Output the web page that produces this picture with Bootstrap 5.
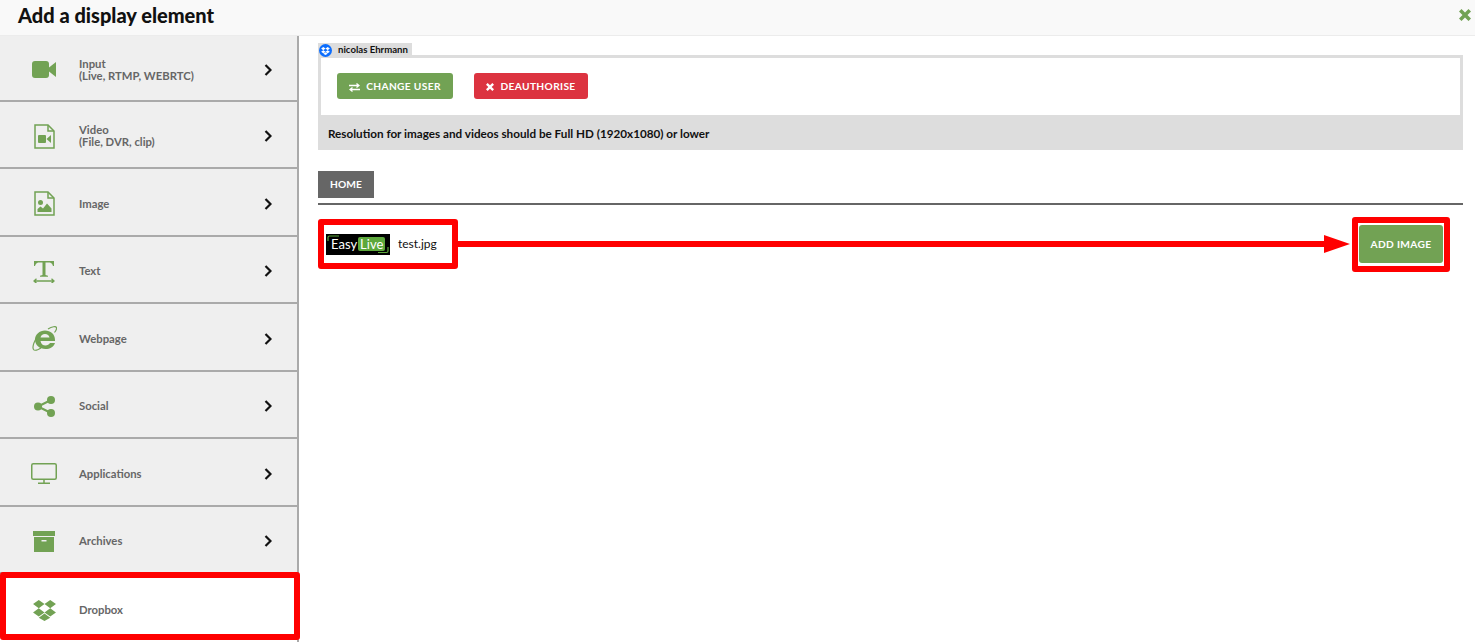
<!DOCTYPE html>
<html lang="en"><head><meta charset="utf-8"><title>Add a display element</title>
<link rel="stylesheet" href="https://cdn.jsdelivr.net/npm/bootstrap@5.3.0/dist/css/bootstrap.min.css">
<style>
html,body{height:642px;overflow:hidden;background:#fff}
body{font-family:Lato,"Liberation Sans",sans-serif;position:relative}
.top-head{height:36px;background:#f9f9f9;border-bottom:1px solid #ececec;padding:0 4px 6px 18px}
.top-head h1{font-size:20px;font-weight:900;color:#111;line-height:30px;margin:0}
.side{width:299px;height:606px;border-right:2px solid #aaa;background:#efefef;flex:none}
.side-item{height:67.5px;border-bottom:2px solid #aaa;padding:4px 25px 0 30px;color:#666;font-size:11.3px;font-weight:700;line-height:12px}
.side-item:first-child{height:65.5px}
.side-item.on{background:#fff;border-bottom:0}
.side-ico{width:28px;margin-right:21px;flex:none;display:flex;justify-content:center}
.gfill{fill:#72a254}
.gline{fill:none;stroke:#72a254}
.main{padding:7px 12px 0 19px;flex:1;min-width:0}
.acct-tab{width:94px;height:12px;background:#ddd;font-size:9.6px;font-weight:700;line-height:14px;color:#111;position:relative;padding-left:20px}
.db-dot{position:absolute;left:1px;top:1px;width:13px;height:13px;border-radius:50%;background:#0d6efd;display:flex;align-items:center;justify-content:center}
.acct-box{border:3px solid #ddd;border-bottom:0;background:#ddd}
.acct-body{height:57px;background:#fff;padding:15px 16px;gap:21px}
.act-btn{height:26px;border:0;border-radius:3px;color:#fff;font-size:10.2px;font-weight:700;letter-spacing:.35px;padding:2px 0 0;gap:6px}
.act-green{width:116px;background:#72a254}
.act-red{width:114px;background:#dc3340}
.acct-note{height:35px;padding:0 7px;font-size:11.7px;font-weight:700;color:#111;line-height:37px}
.crumb-row{margin-top:21px;border-bottom:2px solid #666;height:34px}
.crumb{width:56px;height:27px;background:#666;color:#fff;font-size:10.2px;font-weight:700;letter-spacing:.1px;border:0;border-radius:0;padding:0}
.file-row{height:54px;margin-top:12px;padding:0 20px 0 8px}
.file-logo{width:64px;height:21px;background:#000;margin-right:8px;color:#fff;font-size:13px;line-height:21px;gap:1px;padding-left:5px;position:relative}
.file-logo b{background:#5da83c;font-weight:400;padding:0 2px;line-height:14px;border-radius:2px}
.logo-mark{position:absolute;left:0;top:0}
.file-name{font-size:12px;color:#111}
.add-btn{width:84px;height:38px;background:#72a254;border:0;border-radius:3px;color:#fff;font-size:10.2px;font-weight:700;letter-spacing:.35px;padding:2px 0 0}
.note-box{position:absolute;border:6px solid #f00;border-radius:3px;pointer-events:none}
.note-arrow{position:absolute;left:458px;top:233px}
</style></head><body>
<svg width="0" height="0" class="position-absolute"><defs>
<symbol id="chev" viewBox="0 0 8 12"><path d="M1.500 1 6.500 6l-5 5" fill="none" stroke="#111" stroke-width="2.200"/></symbol>
<symbol id="dbx" viewBox="0 0 24 22"><path d="M6 0 0 4.200l6 4.400 6-4.400zM18 0l-6 4.200 6 4.400 6-4.400zM0 13l6 4.400 6-4.400-6-4.400zM18 8.600 12 13l6 4.400 6-4.400zM6 18.600l6 3.400 6-3.400-6-4.400z"/></symbol>
</defs></svg>
<header class="top-head d-flex justify-content-between align-items-center">
<h1>Add a display element</h1>
<svg width="12" height="12" viewBox="0 0 12 12"><path d="M2.500 0 6 3.500 9.500 0 12 2.500 8.500 6 12 9.500 9.500 12 6 8.500 2.500 12 0 9.500 3.500 6 0 2.500z" class="gfill"/></svg>
</header>
<div class="d-flex">
<nav class="side d-flex flex-column">
<div class="side-item d-flex align-items-center"><span class="side-ico"><svg width="24" height="17" viewBox="0 0 24 17"><rect width="17" height="17" rx="3" class="gfill"/><path d="M17 6.500 24 1v15l-7-5.500z" class="gfill"/></svg></span><span class="flex-grow-1">Input<br>(Live, RTMP, WEBRTC)</span><svg width="8" height="12"><use href="#chev"/></svg></div>
<div class="side-item d-flex align-items-center"><span class="side-ico"><svg width="21" height="25" viewBox="0 0 21 25"><path d="M1 1h13l6 6v17H1z" class="gline" stroke-width="1.500"/><path d="M14 1v6h6" class="gline" stroke-width="1.500"/><rect x="4" y="11" width="8" height="8" rx="1" class="gfill"/><path d="M12.500 15 17 11v8z" class="gfill"/></svg></span><span class="flex-grow-1">Video<br>(File, DVR, clip)</span><svg width="8" height="12"><use href="#chev"/></svg></div>
<div class="side-item d-flex align-items-center"><span class="side-ico"><svg width="21" height="25" viewBox="0 0 21 25"><path d="M1 1h13l6 6v17H1z" class="gline" stroke-width="1.500"/><path d="M14 1v6h6" class="gline" stroke-width="1.500"/><circle cx="6.500" cy="11.500" r="2.500" class="gfill"/><path d="M3.500 21v-3l3-2.500 2.500 2 4-5 4.500 5v3.500z" class="gfill"/></svg></span><span class="flex-grow-1">Image</span><svg width="8" height="12"><use href="#chev"/></svg></div>
<div class="side-item d-flex align-items-center"><span class="side-ico"><svg width="22" height="23" viewBox="0 0 22 23"><path d="M1 6V1h20v5h-1q-.5-3-3-3.500h-4.500V15l2.500.8v1H7v-1l2.500-.8V2.500H5Q2.500 3 2 6z" class="gfill"/><path d="M1 21h20M3.500 18.700 1 21l2.500 2.300M18.500 18.700 21 21l-2.500 2.300" class="gline" stroke-width="1.300"/></svg></span><span class="flex-grow-1">Text</span><svg width="8" height="12"><use href="#chev"/></svg></div>
<div class="side-item d-flex align-items-center"><span class="side-ico"><svg width="25" height="25" viewBox="0 0 25 25"><path d="M13 4.500c5.500 0 10 3.500 10 9.500v1H8.500c.5 3 2.500 4.500 5 4.500 2 0 3.500-1 4.500-2.500h5c-1.500 4-5 6-9.500 6C7.500 23 3 19 3 13.500 3 8.500 7.500 4.500 13 4.500zM8.500 11.500h9C17 9.500 15.500 8 13 8s-4 1.500-4.500 3.500z" class="gfill"/><path d="M16 3c4-2.500 8-3 8.500-1.500.3 1-.5 3-2 5M5 11C2 16 0 21 1.500 23.500 2.500 25 6 24 9 22" class="gline" stroke-width="1.200"/></svg></span><span class="flex-grow-1">Webpage</span><svg width="8" height="12"><use href="#chev"/></svg></div>
<div class="side-item d-flex align-items-center"><span class="side-ico"><svg width="21" height="21" viewBox="0 0 21 21"><circle cx="4" cy="10.500" r="4" class="gfill"/><circle cx="17" cy="4" r="4" class="gfill"/><circle cx="17" cy="17" r="4" class="gfill"/><path d="M4 10.500 17 4M4 10.500 17 17" class="gline" stroke-width="2"/></svg></span><span class="flex-grow-1">Social</span><svg width="8" height="12"><use href="#chev"/></svg></div>
<div class="side-item d-flex align-items-center"><span class="side-ico"><svg width="26" height="21" viewBox="0 0 26 21"><rect x=".75" y=".75" width="24.500" height="15.500" rx="1.500" class="gline" stroke-width="1.500"/><path d="M13 16.500V20M7 20.250h12" class="gline" stroke-width="1.500"/></svg></span><span class="flex-grow-1">Applications</span><svg width="8" height="12"><use href="#chev"/></svg></div>
<div class="side-item d-flex align-items-center"><span class="side-ico"><svg width="22" height="21" viewBox="0 0 22 21"><rect width="22" height="5" class="gfill"/><path d="M1 6h20v15H1zM8.500 9v1.500h5V9z" class="gfill" fill-rule="evenodd"/></svg></span><span class="flex-grow-1">Archives</span><svg width="8" height="12"><use href="#chev"/></svg></div>
<div class="side-item on d-flex align-items-center flex-grow-1"><span class="side-ico"><svg width="23" height="21" class="gfill"><use href="#dbx"/></svg></span><span class="flex-grow-1">Dropbox</span></div>
</nav>
<main class="main">
<div class="acct-tab"><span class="db-dot"><svg width="9" height="8" fill="#fff"><use href="#dbx"/></svg></span>nicolas Ehrmann</div>
<section class="acct-box">
<div class="acct-body d-flex align-items-start">
<button class="btn act-btn act-green d-flex align-items-center justify-content-center"><svg width="11" height="9" viewBox="0 0 11 9"><path d="M0 2.500h9M7.500.5 10 2.500l-2.500 2M11 6.500H2M3.500 4.500 1 6.500l2.500 2" fill="none" stroke="#fff" stroke-width="1.300"/></svg>CHANGE USER</button>
<button class="btn act-btn act-red d-flex align-items-center justify-content-center"><svg width="8" height="8" viewBox="0 0 12 12"><path d="M2.500 0 6 3.500 9.500 0 12 2.500 8.500 6 12 9.500 9.500 12 6 8.500 2.500 12 0 9.500 3.500 6 0 2.500z" fill="#fff"/></svg>DEAUTHORISE</button>
</div>
<div class="acct-note">Resolution for images and videos should be Full HD (1920x1080) or lower</div>
</section>
<div class="crumb-row"><button class="btn crumb">HOME</button></div>
<div class="file-row d-flex align-items-center">
<span class="file-logo d-flex align-items-center"><svg class="logo-mark" width="64" height="21" viewBox="0 0 64 21"><path d="M2 7V3.500Q2 2 3.500 2H13M62 13v4q0 1.500-1.500 1.500H52" fill="none" stroke="#5da83c" stroke-width="1.200"/></svg>Easy<b>Live</b></span>
<span class="file-name flex-grow-1">test.jpg</span>
<button class="btn add-btn">ADD IMAGE</button>
</div>
</main>
</div>
<div class="note-box" style="left:0;top:572px;width:300px;height:68px"></div>
<div class="note-box" style="left:318px;top:219px;width:140px;height:50px"></div>
<div class="note-box" style="left:1352px;top:217px;width:98px;height:55px"></div>
<svg class="note-arrow" width="894" height="22" viewBox="0 0 894 22"><path d="M0 8h866V2l26 9-26 9v-6H0z" fill="#f00"/></svg>
</body></html>
